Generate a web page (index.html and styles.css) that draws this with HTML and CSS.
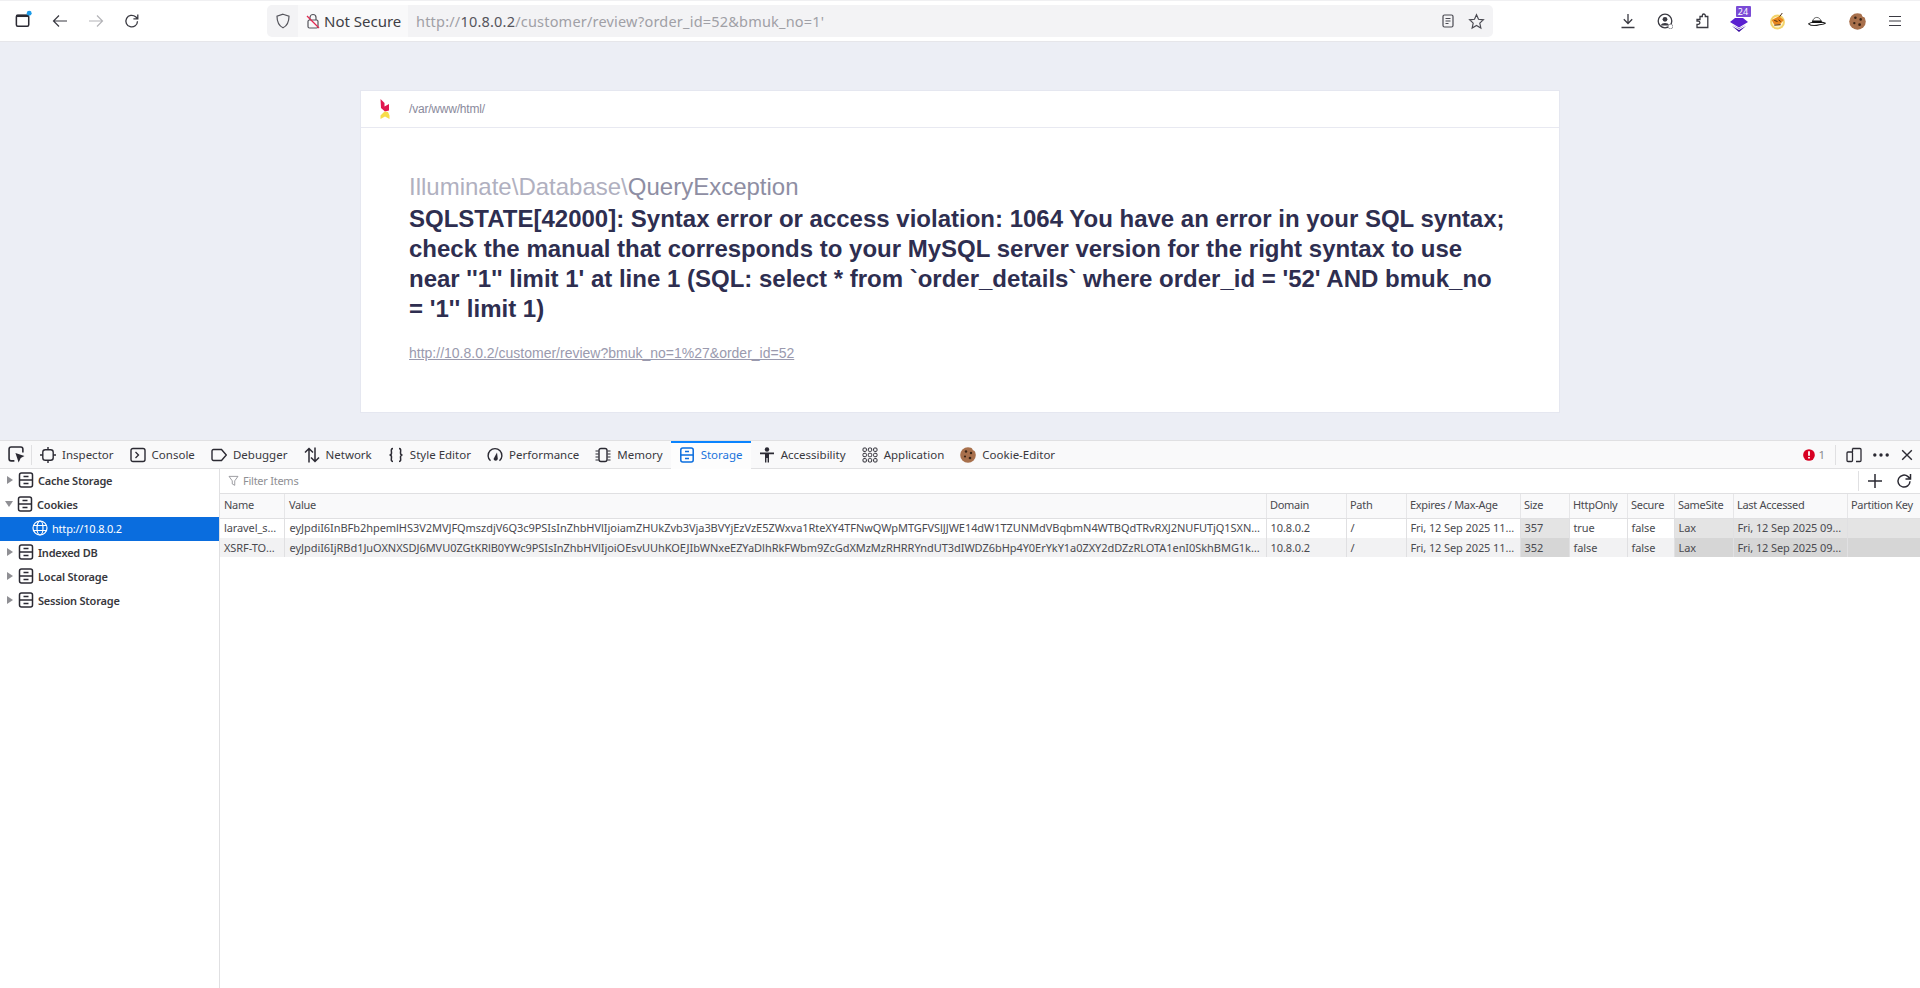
FILE: index.html
```html
<!DOCTYPE html>
<html lang="en">
<head>
<meta charset="utf-8">
<title>Illuminate\Database\QueryException</title>
<link rel="stylesheet" href="styles.css">
</head>
<body>
<header class="browser">
  <div class="nav-left">
    <svg class="ico tabs" viewBox="0 0 20 20"><rect x="2.500" y="5.500" width="13" height="11.500" rx="1.500" fill="none" stroke="#2b2a33" stroke-width="1.600"/><rect x="2.500" y="5" width="13" height="2.400" fill="#2b2a33"/><circle cx="16" cy="3.500" r="2.600" fill="#1c9be8"/></svg>
    <svg class="ico" viewBox="0 0 16 16"><path d="M15 8H1.500M7 2.500 1.500 8 7 13.500" fill="none" stroke="#3a3a42" stroke-width="1.200"/></svg>
    <svg class="ico" viewBox="0 0 16 16"><path d="M1 8h13.500M9 2.500 14.500 8 9 13.500" fill="none" stroke="#b4b4b8" stroke-width="1.200"/></svg>
    <svg class="ico" viewBox="0 0 16 16"><path d="M13.500 8.200A5.800 5.800 0 1 1 11.600 3.800L13.600 5.600M13.800 1.400v4.400H9.400" fill="none" stroke="#3a3a42" stroke-width="1.300"/></svg>
  </div>
  <div class="urlbar">
    <svg class="ico shield" viewBox="0 0 16 16"><path d="M8 1.200 14 3.200c0 5.600-1.600 9.400-6 11.600C3.600 12.600 2 8.800 2 3.200Z" fill="none" stroke="#55555c" stroke-width="1.200"/></svg>
    <div class="secure">
      <svg class="lock" viewBox="0 0 16 16"><path d="M5 7V4.500a3 3 0 0 1 6 0V7" fill="none" stroke="#55555c" stroke-width="1.200"/><rect x="3" y="7" width="10" height="8" rx="1.500" fill="none" stroke="#55555c" stroke-width="1.200"/><path d="M2 3l12 12" stroke="#e22850" stroke-width="1.300"/></svg>
      <span>Not Secure</span>
    </div>
    <div class="url"><span class="g">http://</span>10.8.0.2<span class="g">/customer/review?order_id=52&amp;bmuk_no=1'</span></div>
    <svg class="ico reader" viewBox="0 0 16 16"><rect x="3" y="2" width="10" height="12" rx="1.500" fill="none" stroke="#4a4a52" stroke-width="1.200"/><path d="M5.500 5.500h5M5.500 8h5M5.500 10.500h3" stroke="#4a4a52" stroke-width="1.100"/></svg>
    <svg class="ico star" viewBox="0 0 16 16"><path d="m8 1.600 1.900 4.300 4.600.5-3.400 3.100 1 4.600L8 11.800l-4.100 2.300 1-4.600L1.500 6.400l4.600-.5Z" fill="none" stroke="#4a4a52" stroke-width="1.100"/></svg>
  </div>
  <div class="nav-right">
    <svg class="ico" viewBox="0 0 16 16"><path d="M8 1V10.500M3.800 6.300 8 10.500l4.200-4.200M1.500 14.500h13" fill="none" stroke="#3a3a42" stroke-width="1.300"/></svg>
    <svg class="ico" viewBox="0 0 16 16"><circle cx="8" cy="8" r="6.800" fill="none" stroke="#3a3a42" stroke-width="1.300"/><circle cx="8" cy="6.300" r="2.400" fill="#3a3a42"/><path d="M3.800 12.500c1-3.200 7.400-3.200 8.400 0" fill="#3a3a42"/><circle cx="13.500" cy="13.500" r="2.300" fill="#fff" stroke="#9a9a9f" stroke-width="1"/></svg>
    <svg class="ico" viewBox="0 0 16 16"><path d="M6 3.500h2.300V2.500a1.500 1.500 0 0 1 3 0v1h2.500v11H3v-3.200h1.300a1.500 1.500 0 0 0 0-3.200H3V6.500h3Z" fill="none" stroke="#3a3a42" stroke-width="1.300"/></svg>
    <div class="ext-purple">
      <svg class="purple" viewBox="0 0 20 20"><path d="M1 10 6 6h8l5 4-9 5.500Z" fill="#5a1fd0"/><path d="M3 14l7 4 7-4-7 6Z" fill="#3d11a3"/><path d="M3 12.500 10 17l7-4.500-7 4Z" fill="#3d11a3"/></svg>
      <span class="badge">24</span>
    </div>
    <svg class="ico bug" viewBox="0 0 16 16"><circle cx="8" cy="8.500" r="7" fill="#f3d36a"/><circle cx="8" cy="8.500" r="5.200" fill="#fff3c8"/><path d="M2.500 6.500 9.500 3l4.500 3.500L10 11H5Z" fill="#e8861e"/><path d="M10 3.500 12.500 0M5 7l3 1M9 6.500l2 1.500M5 11.500l6-.5" stroke="#4a2a10" stroke-width=".9"/></svg>
    <svg class="ico hat" viewBox="0 0 16 16"><path d="M.5 10.500c1.500-1.200 3-1.300 4-1.500h7c1.500.2 3 .5 4 1-1.500 1.500-3.500 1-5.500 1.300-2 .7-7 1.500-9.500-.8Z" fill="#fff" stroke="#222" stroke-width=".9"/><path d="M4 8.800C4.500 3.500 11 3.500 11.800 8.800Z" fill="#fff" stroke="#222" stroke-width=".6"/><path d="M3.800 7.500h8.200l.3 2.200H3.600Z" fill="#111"/></svg>
    <svg class="ico cook" viewBox="0 0 16 16"><circle cx="8" cy="8" r="7.800" fill="#a8704c"/><circle cx="14.500" cy="1.500" r="2.400" fill="#fff"/><circle cx="6" cy="4.500" r="1.200" fill="#3a2416"/><circle cx="11" cy="6" r="1.200" fill="#3a2416"/><circle cx="5" cy="9.500" r="1.100" fill="#3a2416"/><circle cx="10" cy="11" r="1.300" fill="#3a2416"/></svg>
    <svg class="ico" viewBox="0 0 16 16"><path d="M2 3.500h12M2 8h12M2 12.500h12" stroke="#3a3a42" stroke-width="1.200"/></svg>
  </div>
</header>

<main class="page">
  <section class="card">
    <div class="card-head">
      <svg class="logo" viewBox="0 0 10 20"><path d="M.5 0 4.500 4v3.500L9 5v6.500L5 12.500 1 9Z" fill="#e0174f"/><path d="M4.500 12.500 8 13l1.500 3.500V20L5 17.500.5 20v-3.500Z" fill="#f7dd4a"/></svg>
      <span class="path">/var/www/html/</span>
    </div>
    <div class="card-body">
      <div class="exc"><span class="ns">Illuminate\Database\</span>QueryException</div>
      <div class="msg">SQLSTATE[42000]: Syntax error or access violation: 1064 You have an error in your SQL syntax; check the manual that corresponds to your MySQL server version for the right syntax to use near ''1'' limit 1' at line 1 (SQL: select * from `order_details` where order_id = '52' AND bmuk_no = '1'' limit 1)</div>
      <a class="req" href="#">http://10.8.0.2/customer/review?bmuk_no=1%27&amp;order_id=52</a>
    </div>
  </section>
</main>

<section class="devtools">
  <nav class="dt-tabs">
    <div class="picker"><svg class="tico" viewBox="0 0 16 16"><path d="M6 14H3A2 2 0 0 1 1 12V3A2 2 0 0 1 3 1h9a2 2 0 0 1 2 2v3" fill="none" stroke="#2b2a33" stroke-width="1.500"/><path d="m7 6.500 8.500 3-3.500 1.700L10 15.500Z" fill="#2b2a33"/></svg></div>
    <div class="tab"><svg class="tico" viewBox="0 0 16 16"><rect x="2.800" y="2.800" width="10.400" height="10.400" rx="2.500" fill="none" stroke="#2b2a33" stroke-width="1.400"/><path d="M8 0v2.800M8 13.200V16M0 8h2.800M13.200 8H16" stroke="#2b2a33" stroke-width="1.400"/></svg>Inspector</div>
    <div class="tab"><svg class="tico" viewBox="0 0 16 16"><rect x="1" y="1.500" width="14" height="13" rx="2" fill="none" stroke="#2b2a33" stroke-width="1.400"/><path d="m5.500 5 3 3-3 3" fill="none" stroke="#2b2a33" stroke-width="1.300"/></svg>Console</div>
    <div class="tab"><svg class="tico" viewBox="0 0 16 16"><path d="M1 4a1.500 1.500 0 0 1 1.500-1.500h8L15.300 8l-4.800 5.500h-8A1.500 1.500 0 0 1 1 12Z" fill="none" stroke="#2b2a33" stroke-width="1.400"/></svg>Debugger</div>
    <div class="tab"><svg class="tico" viewBox="0 0 16 16"><path d="M5 15.500V1.500M1 5.500 5 1.500l4 4M11 .5v14M7 10.500l4 4 4-4" fill="none" stroke="#2b2a33" stroke-width="1.500"/></svg>Network</div>
    <div class="tab"><svg class="tico" viewBox="0 0 16 16"><path d="M5 1.500C2.500 1.500 3.500 4 3.500 6S1.500 8 1.500 8s2 0 2 2-1 4.500 1.500 4.500M11 1.500c2.500 0 1.500 2.500 1.500 4.500s2 2 2 2-2 0-2 2 1 4.500-1.500 4.500" fill="none" stroke="#2b2a33" stroke-width="1.500"/></svg>Style Editor</div>
    <div class="tab"><svg class="tico" viewBox="0 0 16 16"><path d="M3.500 13.800a6.900 6.900 0 1 1 9 0" fill="none" stroke="#2b2a33" stroke-width="1.400"/><path d="m6.500 12 3.500-6.500.8 6.500a2.200 2.200 0 0 1-4.300 0Z" fill="#2b2a33"/></svg>Performance</div>
    <div class="tab"><svg class="tico" viewBox="0 0 16 16"><rect x="4" y="1.500" width="8" height="13" rx="2" fill="none" stroke="#2b2a33" stroke-width="1.400"/><path d="M.5 4H3.500M.5 7H3.500M.5 10H3.500M.5 13H3.500M12.500 4H15.500M12.500 7H15.500M12.500 10H15.500M12.500 13H15.500" stroke="#2b2a33" stroke-width="1.200"/></svg>Memory</div>
    <div class="tab active"><svg class="tico" viewBox="0 0 16 16"><rect x="1.800" y="1" width="12.400" height="14" rx="2" fill="none" stroke="#0a6dde" stroke-width="1.500"/><path d="M1.800 8h12.400M6 4.500h4M6 11.500h4" stroke="#0a6dde" stroke-width="1.400"/></svg>Storage</div>
    <div class="tab"><svg class="tico" viewBox="0 0 16 16"><circle cx="8" cy="2.500" r="2.200" fill="#2b2a33"/><path d="M1 5.500h14v1.800h-5V15.500H8.600v-4.500H7.400v4.500H6V7.300H1Z" fill="#2b2a33"/></svg>Accessibility</div>
    <div class="tab"><svg class="tico" viewBox="0 0 16 16"><g fill="none" stroke="#2b2a33" stroke-width="1"><rect x="1" y="1" width="3.400" height="3.400" rx="1"/><rect x="6.300" y="1" width="3.400" height="3.400" rx="1"/><rect x="11.600" y="1" width="3.400" height="3.400" rx="1"/><rect x="1" y="6.300" width="3.400" height="3.400" rx="1"/><rect x="6.300" y="6.300" width="3.400" height="3.400" rx="1"/><rect x="11.600" y="6.300" width="3.400" height="3.400" rx="1"/><rect x="1" y="11.600" width="3.400" height="3.400" rx="1"/><rect x="6.300" y="11.600" width="3.400" height="3.400" rx="1"/><rect x="11.600" y="11.600" width="3.400" height="3.400" rx="1"/></g></svg>Application</div>
    <div class="tab"><svg class="tico" viewBox="0 0 16 16"><circle cx="8" cy="8" r="7.800" fill="#a8704c"/><circle cx="14.500" cy="1.500" r="2.200" fill="#f9f9fa"/><circle cx="6" cy="4.500" r="1.200" fill="#3a2416"/><circle cx="11" cy="6" r="1.200" fill="#3a2416"/><circle cx="5" cy="9.500" r="1.100" fill="#3a2416"/><circle cx="10" cy="11" r="1.300" fill="#3a2416"/></svg>Cookie-Editor</div>
    <div class="dt-right">
      <svg class="err" viewBox="0 0 16 16"><circle cx="8" cy="8" r="7.800" fill="#d70022"/><path d="M8 3v6M8 10.700v2" stroke="#fff" stroke-width="2.400"/></svg>
      <span class="err-n">1</span>
      <span class="vsep"></span>
      <svg class="tico big" viewBox="0 0 16 16"><rect x="1" y="5" width="5.500" height="9.500" rx="1" fill="none" stroke="#2b2a33" stroke-width="1.300"/><path d="M6.500 1.500H14a1 1 0 0 1 1 1v11a1 1 0 0 1-1 1h-4M6.500 1.500v3.500" fill="none" stroke="#2b2a33" stroke-width="1.300"/></svg>
      <svg class="tico wide" viewBox="0 0 16 16"><circle cx="2.500" cy="8" r="1.500" fill="#2b2a33"/><circle cx="8" cy="8" r="1.500" fill="#2b2a33"/><circle cx="13.500" cy="8" r="1.500" fill="#2b2a33"/></svg>
      <svg class="tico" viewBox="0 0 16 16"><path d="m2.500 2.500 11 11M13.500 2.500l-11 11" stroke="#2b2a33" stroke-width="1.600"/></svg>
    </div>
  </nav>
  <div class="dt-body">
    <aside class="tree">
      <div class="node"><span class="tw"></span><svg class="cab" viewBox="0 0 16 16"><rect x="1.500" y="1" width="13" height="14" rx="2" fill="none" stroke="#2b2a33" stroke-width="1.500"/><path d="M1.500 8h13M5.500 4.500h5M5.500 11.500h5" stroke="#2b2a33" stroke-width="1.300"/></svg>Cache Storage</div>
      <div class="node"><span class="tw open"></span><svg class="cab" viewBox="0 0 16 16"><rect x="1.500" y="1" width="13" height="14" rx="2" fill="none" stroke="#2b2a33" stroke-width="1.500"/><path d="M1.500 8h13M5.500 4.500h5M5.500 11.500h5" stroke="#2b2a33" stroke-width="1.300"/></svg>Cookies</div>
      <div class="node sel"><svg class="globe" viewBox="0 0 16 16"><g fill="none" stroke="#fff" stroke-width="1.200"><circle cx="8" cy="8" r="7"/><ellipse cx="8" cy="8" rx="3" ry="7"/><path d="M1.500 5.500h13M1.500 10.500h13"/></g></svg>http://10.8.0.2</div>
      <div class="node"><span class="tw"></span><svg class="cab" viewBox="0 0 16 16"><rect x="1.500" y="1" width="13" height="14" rx="2" fill="none" stroke="#2b2a33" stroke-width="1.500"/><path d="M1.500 8h13M5.500 4.500h5M5.500 11.500h5" stroke="#2b2a33" stroke-width="1.300"/></svg>Indexed DB</div>
      <div class="node"><span class="tw"></span><svg class="cab" viewBox="0 0 16 16"><rect x="1.500" y="1" width="13" height="14" rx="2" fill="none" stroke="#2b2a33" stroke-width="1.500"/><path d="M1.500 8h13M5.500 4.500h5M5.500 11.500h5" stroke="#2b2a33" stroke-width="1.300"/></svg>Local Storage</div>
      <div class="node"><span class="tw"></span><svg class="cab" viewBox="0 0 16 16"><rect x="1.500" y="1" width="13" height="14" rx="2" fill="none" stroke="#2b2a33" stroke-width="1.500"/><path d="M1.500 8h13M5.500 4.500h5M5.500 11.500h5" stroke="#2b2a33" stroke-width="1.300"/></svg>Session Storage</div>
    </aside>
    <div class="store">
      <div class="filter">
        <svg class="fun" viewBox="0 0 16 16"><path d="M1.500 2h13L9.800 8.500V15l-3.600-2V8.500Z" fill="none" stroke="#8a8a90" stroke-width="1.200"/></svg>
        <span class="ph">Filter Items</span>
        <span class="vsep last"></span>
        <svg class="tico add" viewBox="0 0 16 16"><path d="M8 1v14M1 8h14" stroke="#2b2a33" stroke-width="1.500"/></svg>
        <svg class="tico big" viewBox="0 0 16 16"><path d="M14 8.200A6 6 0 1 1 12 3.600L14 5.500M14.500 1v5h-5" fill="none" stroke="#2b2a33" stroke-width="1.500"/></svg>
      </div>
      <table class="cookies">
        <colgroup>
          <col class="c-name"><col class="c-value"><col class="c-domain"><col class="c-path"><col class="c-exp"><col class="c-size"><col class="c-http"><col class="c-sec"><col class="c-same"><col class="c-last"><col class="c-part">
        </colgroup>
        <thead>
          <tr><th>Name</th><th class="v">Value</th><th>Domain</th><th>Path</th><th>Expires / Max-Age</th><th>Size</th><th>HttpOnly</th><th>Secure</th><th>SameSite</th><th>Last Accessed</th><th>Partition Key</th></tr>
        </thead>
        <tbody>
          <tr><td>laravel_session</td><td class="v">eyJpdiI6InBFb2hpemlHS3V2MVJFQmszdjV6Q3c9PSIsInZhbHVlIjoiamZHUkZvb3Vja3BVYjEzVzE5ZWxva1RteXY4TFNwQWpMTGFVSlJJWE14dW1TZUNMdVBqbmN4WTBQdTRvRXJ2NUFUTjQ1SXNaWTZ3</td><td>10.8.0.2</td><td>/</td><td>Fri, 12 Sep 2025 11:20:31 GMT</td><td class="hl">357</td><td>true</td><td>false</td><td class="hl">Lax</td><td class="hl">Fri, 12 Sep 2025 09:20:31 GMT</td><td class="hl"></td></tr>
          <tr><td>XSRF-TOKEN</td><td class="v">eyJpdiI6IjRBd1JuOXNXSDJ6MVU0ZGtKRlB0YWc9PSIsInZhbHVlIjoiOEsvUUhKOEJIbWNxeEZYaDlhRkFWbm9ZcGdXMzMzRHRRYndUT3dIWDZ6bHp4Y0ErYkY1a0ZXY2dDZzRLOTA1enI0SkhBMG1kc3ZaWTZ3</td><td>10.8.0.2</td><td>/</td><td>Fri, 12 Sep 2025 11:20:31 GMT</td><td class="hl">352</td><td>false</td><td>false</td><td class="hl">Lax</td><td class="hl">Fri, 12 Sep 2025 09:20:31 GMT</td><td class="hl"></td></tr>
        </tbody>
      </table>
    </div>
  </div>
</section>
</body>
</html>
```
FILE: styles.css
```css
* { box-sizing: border-box; }
html, body { margin: 0; height: 100%; }
body {
  display: flex;
  flex-direction: column;
  height: 988px;
  overflow: hidden;
  background: #fff;
  font-family: "Noto Sans", sans-serif;
  color: #2b2a33;
}
.ico { width: 16px; height: 16px; flex: none; display: block; }

/* browser chrome */
.browser {
  height: 42px;
  flex: none;
  display: flex;
  align-items: center;
  background: #fff;
  border-top: 1px solid #f0f0f2;
  border-bottom: 1px solid #e6e6ea;
}
.nav-left { width: 267px; flex: none; display: flex; align-items: center; gap: 20px; padding-left: 14px; }
.tabs { width: 19px; height: 19px; margin-top: -3px; margin-right: -1px; }
.urlbar {
  width: 1226px;
  height: 32px;
  flex: none;
  display: flex;
  align-items: center;
  background: #f3f3f5;
  border-radius: 5px;
}
.shield { margin-left: 8px; margin-right: 7px; }
.secure {
  width: 110px;
  height: 32px;
  flex: none;
  display: flex;
  align-items: center;
  gap: 3px;
  padding-left: 7px;
  background: #f9f9fa;
  font-size: 15px;
  color: #3f3f46;
}
.lock { width: 16px; height: 16px; flex: none; }
.url { flex: 1; padding-left: 8px; font-size: 14.5px; letter-spacing: .2px; color: #55555c; white-space: nowrap; }
.g { color: #a0a0a6; }
.reader { margin-right: 12px; }
.star { margin-right: 8px; width: 17px; height: 17px; }
.nav-right { flex: 1; display: flex; align-items: center; justify-content: flex-end; gap: 21px; padding-right: 17px; }
.ext-purple { position: relative; width: 18px; height: 18px; margin-left: -1px; }
.purple { width: 20px; height: 20px; display: block; margin-left: -1px; margin-top: 0; }
.bug { width: 17px; height: 17px; margin-left: .5px; }
.hat { width: 18px; height: 18px; margin-left: 1px; }
.cook { width: 17px; height: 17px; margin-left: 2px; }
.badge {
  position: absolute;
  left: 6px;
  top: -6px;
  width: 15px;
  height: 11px;
  background: #7a4bd6;
  color: #fff;
  font-size: 9px;
  line-height: 11px;
  text-align: center;
  border-radius: 1px;
}

/* error page */
.page { height: 398px; flex: none; background: #eceef5; padding: 48px 360px 0 360px; }
.card { height: 323px; background: #fff; border: 1px solid #e5e7f0; font-family: "Liberation Sans", sans-serif; }
.card-head { height: 37px; display: flex; align-items: center; gap: 19px; padding-left: 19px; border-bottom: 1px solid #e8e9f1; }
.logo { width: 10px; height: 20px; flex: none; }
.path { font-size: 12px; letter-spacing: -.2px; color: #8a8a9c; }
.card-body { padding: 43px 48px 0; }
.exc { font-size: 24px; line-height: 32px; color: #8e8ea3; }
.ns { color: #b0b0c0; }
.msg { font-size: 24px; line-height: 30px; font-weight: 700; color: #2e2e50; margin-top: 1px; }
.req { display: inline-block; margin-top: 19px; font-size: 14px; line-height: 20px; color: #9a9aae; text-decoration: underline; }

/* devtools */
.devtools { flex: 1; min-height: 0; display: flex; flex-direction: column; background: #fff; font-size: 11.5px; }
.dt-tabs {
  height: 29px;
  flex: none;
  display: flex;
  align-items: center;
  background: #f9f9fa;
  border-top: 1px solid #e0e0e2;
  border-bottom: 1px solid #e0e0e2;
}
.tico { width: 14px; height: 14px; flex: none; display: block; }
.picker { width: 32px; height: 20px; display: flex; align-items: center; padding-left: 8px; border-right: 1px solid #e0e0e2; }
.picker .tico { width: 17px; height: 17px; }
.tab { height: 28px; display: flex; align-items: center; gap: 6px; padding: 0 8.05px; color: #38383d; white-space: nowrap; }
.tab .tico { width: 16px; height: 16px; }
.active { color: #1a74dc; box-shadow: inset 0 2px 0 #0a84ff; background: #fdfdfd; }
.dt-right { margin-left: auto; display: flex; align-items: center; gap: 10px; padding-right: 6px; }
.err { width: 12px; height: 12px; }
.err-n { color: #8a8a90; margin-left: -7px; }
.vsep { width: 1px; height: 20px; background: #e0e0e2; }
.big { width: 16px; height: 16px; }
.wide { width: 18px; height: 18px; }

.dt-body { flex: 1; min-height: 0; display: flex; }
.tree { width: 220px; flex: none; border-right: 1px solid #e0e0e2; font-weight: 600; color: #38383d; font-size: 11px; letter-spacing: -.2px; }
.node { height: 24px; display: flex; align-items: center; padding-left: 7px; padding-bottom: 2px; white-space: nowrap; }
.tw { width: 0; height: 0; border-style: solid; border-width: 4px 0 4px 6px; border-color: transparent transparent transparent #8f8f94; margin-right: 5px; }
.tw.open { border-width: 6px 4px 0; border-color: #8f8f94 transparent transparent; margin-left: -2px; margin-right: 4px; }
.cab { width: 16px; height: 16px; margin-right: 4px; flex: none; }
.sel { background: #0a6dde; color: #fff; font-weight: 400; padding-left: 32px; }
.globe { width: 16px; height: 16px; margin-right: 4px; flex: none; }

.store { flex: 1; min-width: 0; }
.filter { height: 25px; display: flex; align-items: center; padding: 0 8px 1px 8px; border-bottom: 1px solid #e0e0e2; }
.fun { width: 11px; height: 11px; margin-right: 4px; flex: none; }
.ph { color: #8f8f94; flex: 1; font-size: 11px; letter-spacing: -.25px; }
.vsep.last { margin-right: 8px; }
.add { width: 16px; height: 16px; margin-right: 13px; }
.cookies { width: 1700px; table-layout: fixed; border-collapse: collapse; font-size: 11px; }
.c-name { width: 64px; } .c-value { width: 982px; } .c-domain { width: 80px; } .c-path { width: 60px; }
.c-exp { width: 114px; } .c-size { width: 49px; } .c-http { width: 58px; } .c-sec { width: 47px; }
.c-same { width: 59px; } .c-last { width: 114px; } .c-part { width: 73px; }
th, td {
  padding: 0 5px 0 4px;
  text-align: left;
  font-weight: 400;
  white-space: nowrap;
  overflow: hidden;
  text-overflow: ellipsis;
}
th { height: 24px; background: #f9f9fa; color: #4a4a4f; border-bottom: 1px solid #e0e0e2; box-shadow: inset 1px 0 0 #e6e6e8; padding-bottom: 2px; letter-spacing: -.3px; }
td { color: #4a4a4f; border-left: 1px solid #e0e0e2; letter-spacing: -.1px; padding-bottom: 1px; }
.cookies .v { padding-left: 5px; }
td.v { letter-spacing: -.05px; }
td:first-child, th:first-child { border-left: 0; box-shadow: none; }
tbody tr:nth-child(1) td { height: 20px; }
tbody tr:nth-child(2) td { height: 19px; background: #f2f2f3; }
tbody tr:nth-child(1) td.hl { background: #e4e4e4; }
tbody tr:nth-child(2) td.hl { background: #d6d6d6; }
```
